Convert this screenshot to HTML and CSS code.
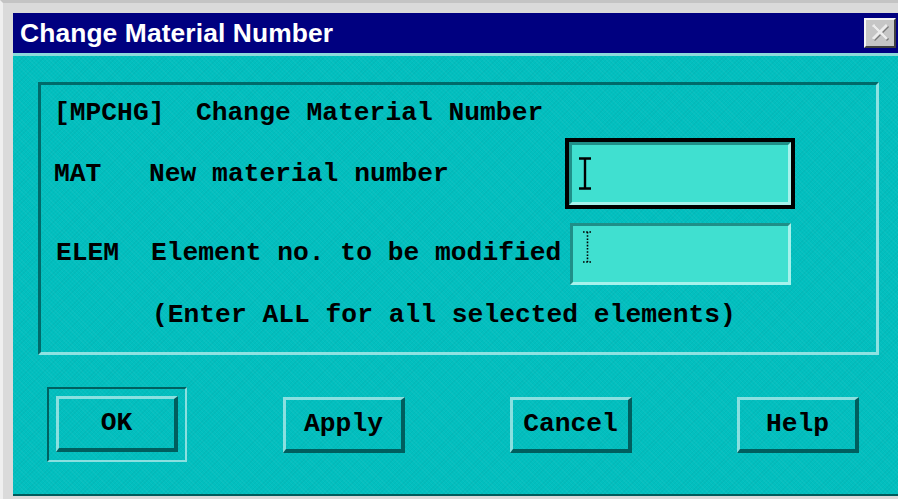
FILE: index.html
```html
<!DOCTYPE html>
<html lang="en">
<head>
<meta charset="utf-8">
<title>Change Material Number</title>
<link rel="stylesheet" href="styles.css">
</head>
<body>
<div class="desktop">
  <div class="dialog">
    <div class="titlebar">
      <span class="title">Change Material Number</span>
      <span class="close" aria-label="Close">
        <svg width="26" height="24" viewBox="0 0 26 24">
          <path d="M6 4 L20 18 M20 4 L6 18" stroke="#7a7a7a" stroke-width="3" fill="none" transform="translate(1 1)"/>
          <path d="M6 4 L20 18 M20 4 L6 18" stroke="#ececec" stroke-width="3" fill="none"/>
        </svg>
      </span>
    </div>
    <div class="body">
      <div class="group">
        <div class="row heading">[MPCHG]&nbsp;&nbsp;Change Material Number</div>
        <div class="row field first">
          <span class="key">MAT</span>
          <span class="desc">New material number</span>
          <span class="input focused">
            <svg class="ibeam" width="14" height="33" viewBox="0 0 14 33">
              <path d="M1 1.5 H13 M1 31.5 H13 M7 1.5 V31.5" stroke="#000" stroke-width="2.4" fill="none"/>
            </svg>
          </span>
        </div>
        <div class="row field second">
          <span class="key">ELEM</span>
          <span class="desc">Element no. to be modified</span>
          <span class="input">
            <svg class="ibeam dotted" width="11" height="34" viewBox="0 0 11 34">
              <path d="M1 2 H10 M1 32 H10 M5.5 2 V32" stroke="#000" stroke-width="1.6" stroke-dasharray="1.6 1.6" fill="none"/>
            </svg>
          </span>
        </div>
        <div class="row note">(Enter ALL for all selected elements)</div>
      </div>
      <div class="buttons">
        <span class="default-ring"><button class="btn">OK</button></span>
        <button class="btn">Apply</button>
        <button class="btn">Cancel</button>
        <button class="btn">Help</button>
      </div>
    </div>
  </div>
</div>
</body>
</html>
```

FILE: styles.css
```css
html, body {
  margin: 0;
  padding: 0;
}

body {
  width: 898px;
  height: 499px;
  overflow: hidden;
  background: #d4d4d4;
}

.desktop {
  box-sizing: border-box;
  height: 499px;
  border-top: 3px solid #c4c4c4;
  border-left: 3px solid #efefef;
  padding: 10px 0 0 10px;
  background: #dadada;
}

.dialog {
  display: flex;
  flex-direction: column;
}

/* navy caption strip */
.titlebar {
  height: 40px;
  background: #000080;
  display: flex;
  align-items: center;
  justify-content: space-between;
  padding: 0 2px 0 7px;
}

.title {
  color: #ffffff;
  font-family: "Liberation Sans", Arial, sans-serif;
  font-weight: bold;
  font-size: 26.4px;
  line-height: 40px;
  letter-spacing: 0.1px;
}

.close {
  box-sizing: border-box;
  width: 32px;
  height: 30px;
  background: #c6c6c6;
  border-top: 2px solid #f4f4f4;
  border-left: 2px solid #f4f4f4;
  border-right: 2px solid #404040;
  border-bottom: 2px solid #404040;
  display: flex;
  align-items: center;
  justify-content: center;
}

.body {
  box-sizing: border-box;
  height: 443px;
  background-color: #02bfbf;
  background-image:
    repeating-linear-gradient(45deg, rgba(255,255,255,0.035) 0 1px, transparent 1px 3px),
    repeating-linear-gradient(-45deg, rgba(0,0,0,0.03) 0 1px, transparent 1px 3px);
  border-top: 3px solid #8cdada;
  border-bottom: 2px solid #005a5a;
  padding: 26px 0 0 25px;
  font-family: "Liberation Mono", "Courier New", monospace;
  font-weight: bold;
  font-size: 26.3px;
  color: #000;
}

/* sunken frame around the parameters */
.group {
  box-sizing: border-box;
  width: 841px;
  height: 273px;
  border-top: 3px solid #006a6a;
  border-left: 3px solid #006a6a;
  border-right: 3px solid #8ee2e2;
  border-bottom: 3px solid #8ee2e2;
  padding: 8px 0 0 13px;
  display: flex;
  flex-direction: column;
}

.row {
  white-space: pre;
}

.heading {
  height: 40px;
  line-height: 40px;
}

.field {
  display: grid;
  grid-template-columns: 95px 420px 222px;
  align-items: center;
}

.field.first {
  margin-top: 9px;
  height: 63px;
}

.field.second {
  margin-top: 18px;
  height: 62px;
}

.field.second .key,
.field.second .desc {
  padding-left: 2px;
  margin-top: -3px;
}

.input {
  box-sizing: border-box;
  height: 62px;
  background: #40e0d0;
  border-top: 3px solid #1f8f88;
  border-left: 3px solid #1f8f88;
  border-right: 3px solid #a6f2ec;
  border-bottom: 3px solid #a6f2ec;
  display: flex;
  align-items: center;
  padding-left: 6px;
}

.input.focused {
  height: 63px;
  outline: 4px solid #000;
}

.field.second .input {
  margin-left: 1px;
}

.ibeam.dotted {
  margin-top: -14px;
  margin-left: 3px;
}

.note {
  margin-top: 10px;
  padding-left: 98px;
  height: 40px;
  line-height: 40px;
}

.buttons {
  display: flex;
  gap: 105px;
  margin-top: 42px;
  padding-left: 18px;
}

.btn {
  box-sizing: border-box;
  width: 122px;
  height: 56px;
  padding: 0;
  margin: 0;
  background: transparent;
  border-top: 3px solid #8ae0e0;
  border-left: 3px solid #8ae0e0;
  border-right: 4px solid #005e5e;
  border-bottom: 4px solid #005e5e;
  font-family: "Liberation Mono", "Courier New", monospace;
  font-weight: bold;
  font-size: 26.3px;
  color: #000;
  line-height: 1;
}

/* recessed ring marking the default button */
.default-ring {
  display: inline-flex;
  margin: -10px -9px -9px -9px;
  padding: 7px;
  border-top: 2px solid #006060;
  border-left: 2px solid #006060;
  border-right: 2px solid #8ae0e0;
  border-bottom: 2px solid #8ae0e0;
}
```
